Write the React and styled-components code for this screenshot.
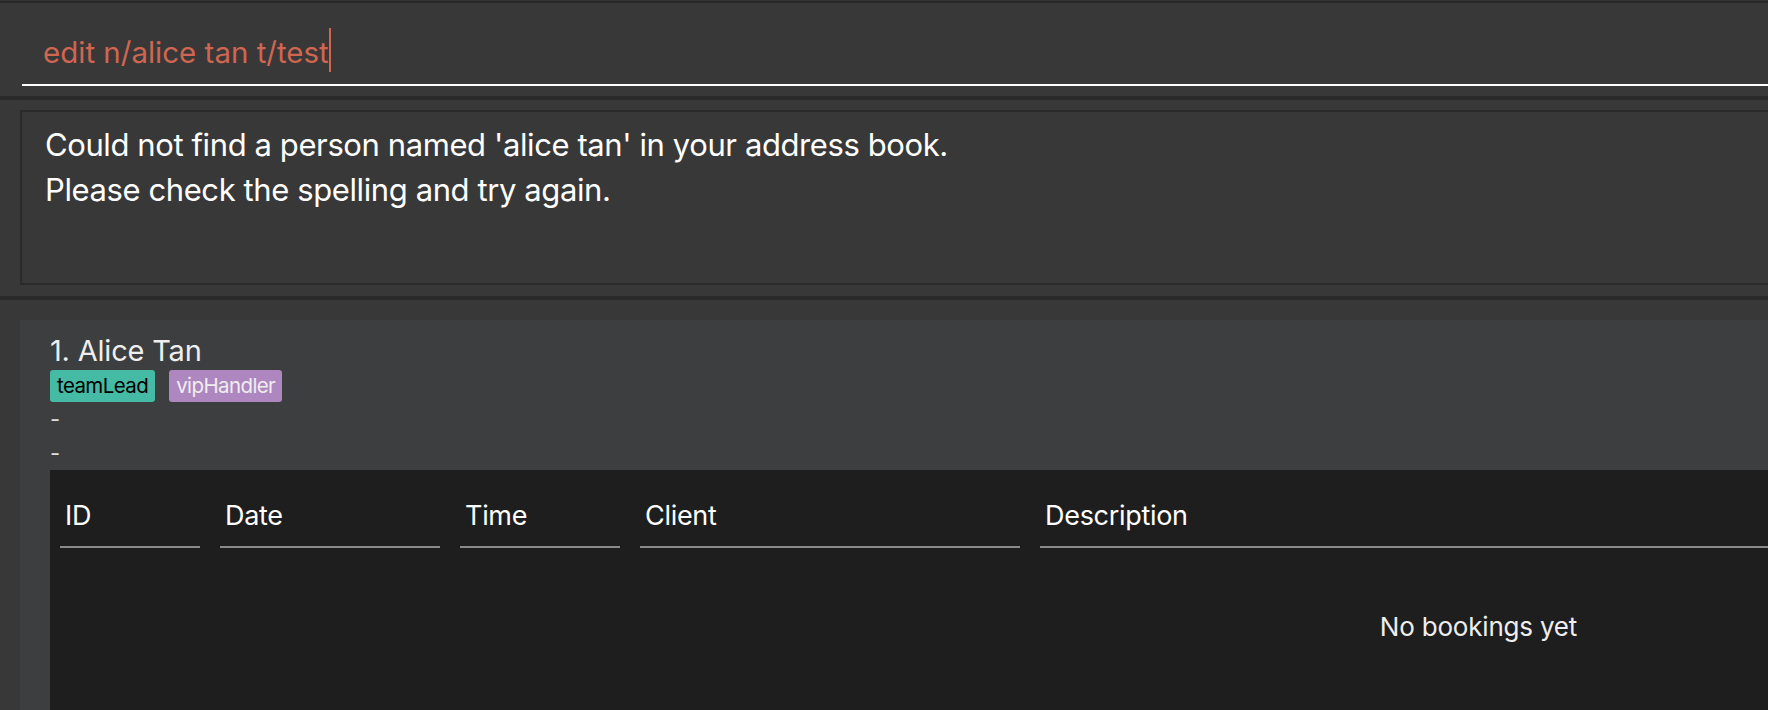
import styled, { createGlobalStyle } from "styled-components";

const GlobalStyle = createGlobalStyle`
  html, body {
    margin: 0;
    padding: 0;
    overflow: hidden;
    background-color: #383838;
  }
  body {
    font-family: Inter, "Noto Sans", sans-serif;
  }
`;

// the app window is wider than the screenshot, so the right part is cut off
const Window = styled.div`
  width: 2957px;
  min-height: 710px;
  display: flex;
  flex-direction: column;
  background-color: #383838;
  border-top: 1px solid #333333;
`;

const CommandBar = styled.div`
  border-top: 2px solid #282828;
  height: 95px;
  padding-left: 22px;
  box-sizing: border-box;
`;

const CommandField = styled.div`
  display: flex;
  align-items: center;
  height: 83px;
  padding: 16px 0 0 21px;
  border-bottom: 2px solid #ffffff;
  box-sizing: border-box;
`;

const CommandText = styled.span`
  font-size: 29.5px;
  color: #d06651;
  white-space: pre;
`;

const Caret = styled.span`
  display: inline-block;
  width: 2px;
  height: 44px;
  margin-bottom: 3px;
  background-color: #d06651;
`;

const Divider = styled.div`
  height: 4px;
  background-color: #2a2a2a;
`;

const ResultPane = styled.div`
  padding: 10px 0 11px 20px;
`;

const ResultBox = styled.div`
  height: 175px;
  box-sizing: border-box;
  border: 2px solid #2a2a2a;
  border-right: none;
  padding: 10px 0 0 23px;
`;

const ResultLine = styled.div`
  font-size: 31px;
  line-height: 45px;
  letter-spacing: -0.4px;
  color: #ffffff;
  white-space: pre;
`;

const ListPane = styled.div`
  flex: 1;
  padding: 20px 0 0 20px;
  display: flex;
  flex-direction: column;
`;

const PersonCard = styled.div`
  flex: 1;
  background-color: #3c3e40;
  padding: 13px 0 0 30px;
`;

const Name = styled.div`
  font-size: 29px;
  line-height: 36px;
  letter-spacing: -0.2px;
  color: #eeeeee;
  white-space: pre;
`;

const Tags = styled.div`
  display: flex;
  gap: 14px;
  margin-top: 1px;
`;

const Tag = styled.span`
  height: 32px;
  padding: 0 7px;
  border-radius: 3px;
  font-size: 20.5px;
  line-height: 32px;
  letter-spacing: -0.6px;
  background-color: ${(p) => p.$bg};
  color: ${(p) => p.$fg};
`;

const Field = styled.div`
  font-size: 22px;
  line-height: 34px;
  color: #dddddd;
`;

const BookingTable = styled.div`
  width: 2857px;
  min-height: 300px;
  background-color: #1e1e1e;
  padding: 28px 10px 0 10px;
  box-sizing: border-box;
`;

const HeaderRow = styled.div`
  display: flex;
  gap: 20px;
`;

const HeaderCell = styled.div`
  flex: ${(p) => (p.$width ? `0 0 ${p.$width}px` : "1")};
  padding: 0 5px 13px 5px;
  box-sizing: border-box;
  border-bottom: 2px solid #8a8a8a;
  font-size: 27px;
  line-height: 35px;
  letter-spacing: -0.3px;
  color: #ffffff;
  white-space: nowrap;
`;

const EmptyState = styled.div`
  padding-top: 62px;
  text-align: center;
  font-size: 26px;
  line-height: 33px;
  letter-spacing: -0.2px;
  color: #eeeeee;
`;

const columns = [
  { label: "ID", width: 140 },
  { label: "Date", width: 220 },
  { label: "Time", width: 160 },
  { label: "Client", width: 380 },
  { label: "Description" },
];

const tags = [
  { label: "teamLead", bg: "#45bba5", fg: "#000000" },
  { label: "vipHandler", bg: "#ae86c0", fg: "#eeeeee" },
];

function App() {
  return (
    <>
      <GlobalStyle />
      <Window>
        <CommandBar>
          <CommandField>
            <CommandText>edit n/alice tan t/test</CommandText>
            <Caret />
          </CommandField>
        </CommandBar>
        <Divider />
        <ResultPane>
          <ResultBox>
            <ResultLine>Could not find a person named 'alice tan' in your address book.</ResultLine>
            <ResultLine>Please check the spelling and try again.</ResultLine>
          </ResultBox>
        </ResultPane>
        <Divider />
        <ListPane>
          <PersonCard>
            <Name>1. Alice Tan</Name>
            <Tags>
              {tags.map((t) => (
                <Tag key={t.label} $bg={t.bg} $fg={t.fg}>
                  {t.label}
                </Tag>
              ))}
            </Tags>
            <Field>-</Field>
            <Field>-</Field>
            <BookingTable>
              <HeaderRow>
                {columns.map((c) => (
                  <HeaderCell key={c.label} $width={c.width}>
                    {c.label}
                  </HeaderCell>
                ))}
              </HeaderRow>
              <EmptyState>No bookings yet</EmptyState>
            </BookingTable>
          </PersonCard>
        </ListPane>
      </Window>
    </>
  );
}

export default App;
